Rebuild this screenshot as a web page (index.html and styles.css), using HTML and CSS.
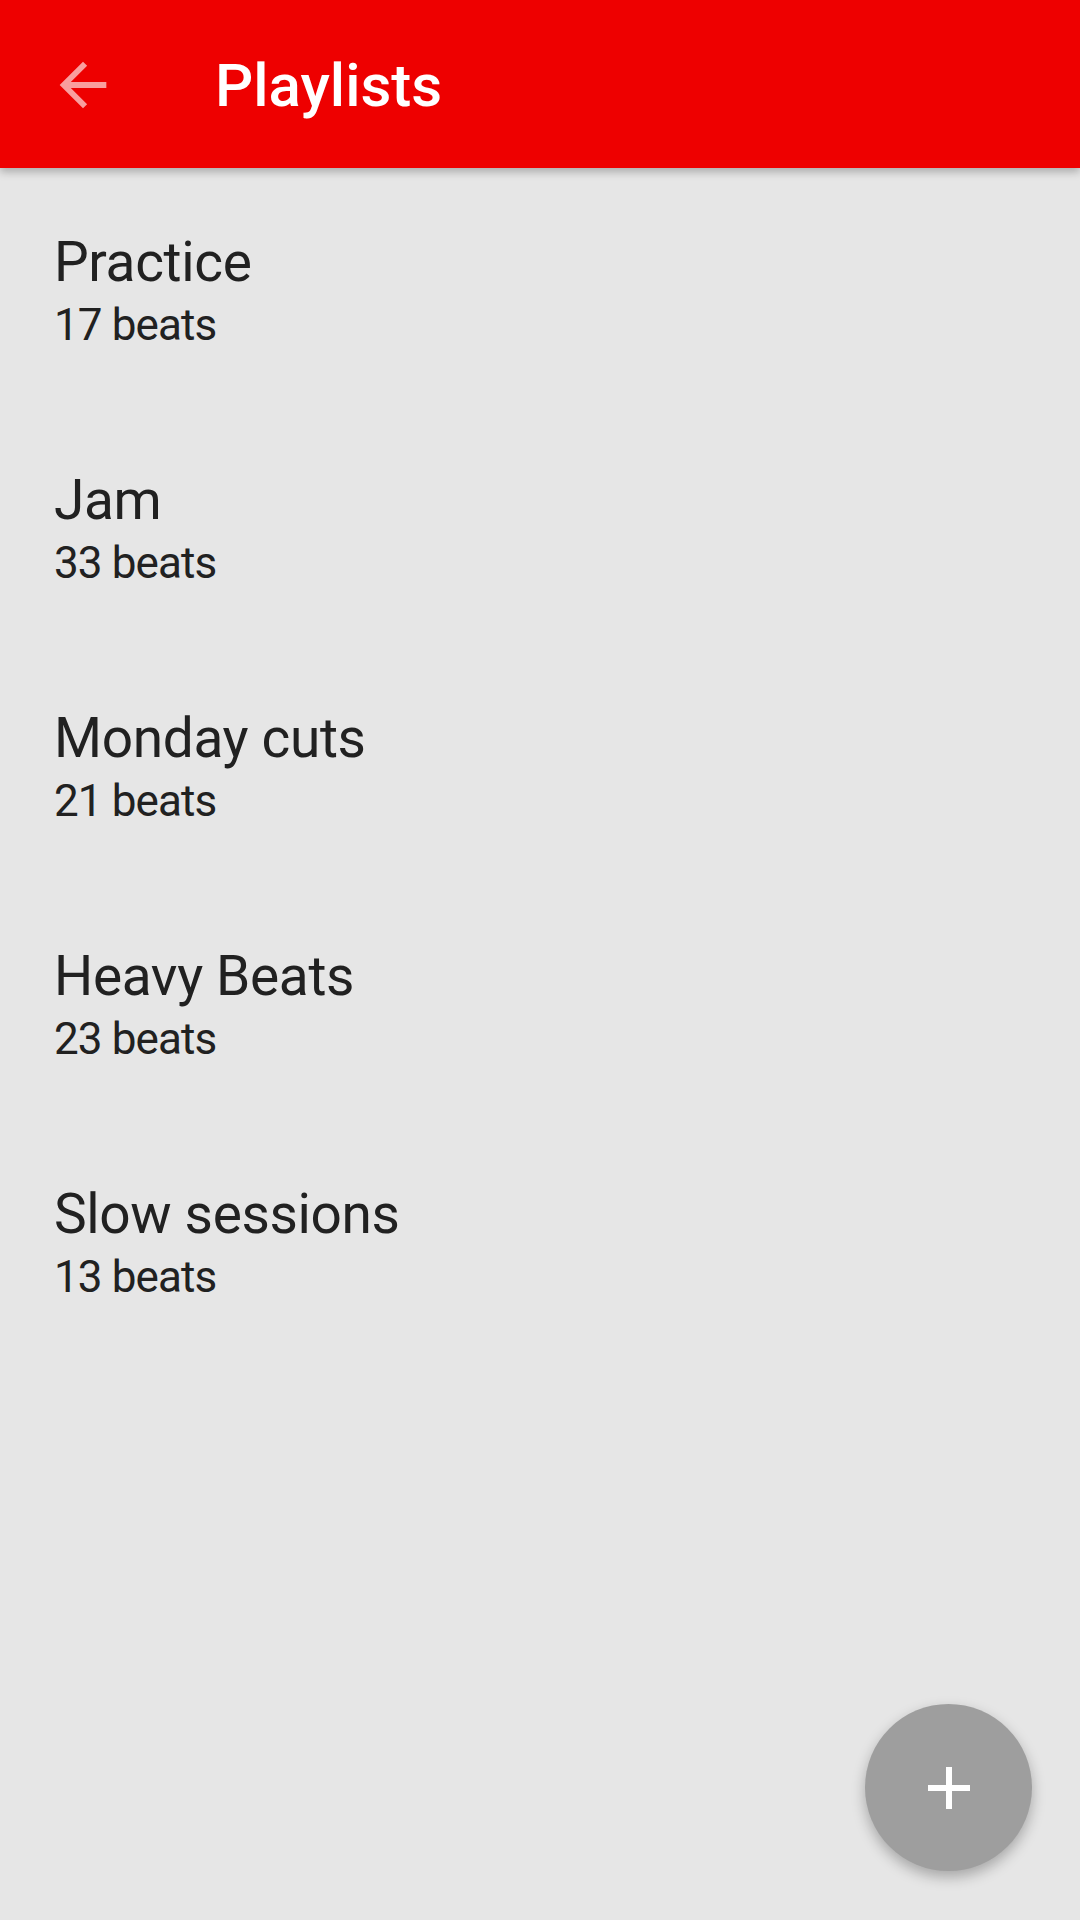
FILE: index.html
```html
<!DOCTYPE html>
<html lang="en">
<head>
    <meta charset="UTF-8">
    <meta name="viewport" content="width=device-width, initial-scale=1.0">
    <title>Playlists</title>
    <link rel="stylesheet" href="styles.css">
</head>
<body>
    <header class="app-bar">
        <button class="back-button" aria-label="Back">
            <svg viewBox="0 0 24 24" width="70" height="70">
                <path d="M20 11H7.83l5.59-5.59L12 4l-8 8 8 8 1.41-1.41L7.83 13H20v-2z"/>
            </svg>
        </button>
        <h1 class="app-title">Playlists</h1>
    </header>

    <ul class="playlist-list">
        <li class="playlist-item">
            <div class="playlist-name">Practice</div>
            <div class="playlist-count">17 beats</div>
        </li>
        <li class="playlist-item">
            <div class="playlist-name">Jam</div>
            <div class="playlist-count">33 beats</div>
        </li>
        <li class="playlist-item">
            <div class="playlist-name">Monday cuts</div>
            <div class="playlist-count">21 beats</div>
        </li>
        <li class="playlist-item">
            <div class="playlist-name">Heavy Beats</div>
            <div class="playlist-count">23 beats</div>
        </li>
        <li class="playlist-item">
            <div class="playlist-name">Slow sessions</div>
            <div class="playlist-count">13 beats</div>
        </li>
    </ul>

    <button class="fab" aria-label="Add playlist">
        <svg viewBox="0 0 42 42" width="42" height="42">
            <rect x="18" y="0" width="6" height="42"/>
            <rect x="0" y="18" width="42" height="6"/>
        </svg>
    </button>
</body>
</html>
```

FILE: styles.css
```css
body {
    font-family: Roboto, "Liberation Sans", sans-serif;
    background-color: #e6e6e6;
    margin: 0;
    padding: 0;
    width: 1080px;
    height: 1920px;
    overflow: hidden;
    color: #212121;
}
.app-bar {
    height: 168px;
    background-color: #ee0000;
    display: flex;
    align-items: center;
    box-shadow: 0 4px 8px rgba(0, 0, 0, 0.25);
    position: relative;
    z-index: 1;
}
.back-button {
    width: 70px;
    height: 70px;
    margin-left: 48px;
    margin-top: 1px;
    padding: 0;
    border: none;
    background: none;
    display: flex;
}
.back-button svg {
    fill: rgba(255, 255, 255, 0.62);
}
.app-title {
    margin: 0 0 0 97px;
    color: white;
    font-size: 60px;
    font-weight: 500;
    line-height: 1;
    padding-top: 4px;
}
.playlist-list {
    list-style: none;
    margin: 0;
    padding: 6px 0 0 0;
}
.playlist-item {
    padding: 56px 54px;
}
.playlist-name {
    font-size: 55px;
    line-height: 64px;
    letter-spacing: -0.35px;
}
.playlist-count {
    font-size: 44px;
    line-height: 62px;
    letter-spacing: -0.9px;
}
.fab {
    position: fixed;
    right: 48px;
    bottom: 49px;
    width: 167px;
    height: 167px;
    border-radius: 50%;
    border: none;
    background-color: #9e9e9e;
    box-shadow: 0 6px 14px rgba(0, 0, 0, 0.28);
    display: flex;
    align-items: center;
    justify-content: center;
    padding: 0;
}
.fab svg {
    fill: white;
}
```
